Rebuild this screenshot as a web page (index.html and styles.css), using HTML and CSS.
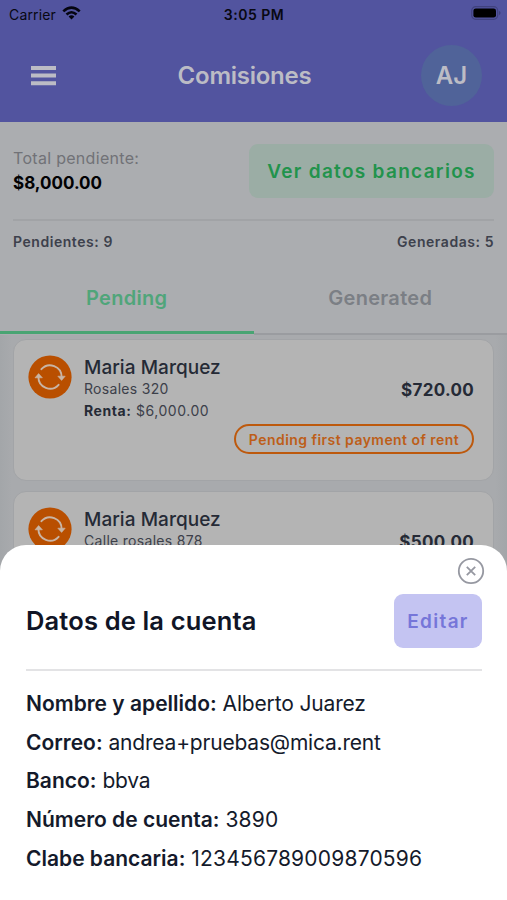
FILE: index.html
```html
<!DOCTYPE html>
<html lang="es">
<head>
<meta charset="utf-8">
<title>Comisiones</title>
<link rel="stylesheet" href="styles.css">
</head>
<body>
<div class="screen">
  <header class="top">
    <div class="status">
      <div class="carrier"><span>Carrier</span>
        <svg width="19" height="14" viewBox="0 0 19 14" fill="#050510"><path d="M.4 4.4Q9.5-3.8 18.6 4.4L16.8 6.3Q9.5-.2 2.2 6.3Z"/><path d="M3.6 7.6Q9.5 2.3 15.4 7.6L13.6 9.4Q9.5 5.8 5.4 9.4Z"/><path d="M6.6 10.6Q9.5 8.1 12.4 10.6L9.5 13.6Z"/></svg>
      </div>
      <div class="time">3:05 PM</div>
      <svg class="battery" width="31" height="14" viewBox="0 0 31 14"><rect x=".7" y=".7" width="26" height="12.6" rx="4" fill="none" stroke="#40427e" stroke-width="1.2"/><rect x="2.4" y="2.4" width="22.6" height="9.2" rx="2.4" fill="#000"/><path d="M28.4 4.8q2 2.2 0 4.4z" fill="#353766"/></svg>
    </div>
    <div class="nav">
      <svg class="menu" width="25" height="20" viewBox="0 0 25 20" fill="#bcbcc5"><path d="M0 0h25v4H0zM0 7.6h25v4H0zM0 15.2h25v4H0z"/></svg>
      <h1>Comisiones</h1>
      <div class="avatar">AJ</div>
    </div>
  </header>
  <section class="summary">
    <div class="totals">
      <div><div class="label">Total pendiente:</div><div class="total">$8,000.00</div></div>
      <button class="bank">Ver datos bancarios</button>
    </div>
    <div class="counts"><span>Pendientes: 9</span><span>Generadas: 5</span></div>
  </section>
  <nav class="tabs"><div class="tab active"><span>Pending</span></div><div class="tab"><span>Generated</span></div></nav>
  <main class="list">
    <article class="card">
      <svg class="cycle" width="44" height="44" viewBox="0 0 44 44"><circle cx="22" cy="22" r="21.6" fill="#b94f00"/><g fill="none" stroke="#c9b5a5" stroke-width="1.9" stroke-linecap="round"><path d="M13.4 14.2A11.6 11.6 0 0 1 33.6 22M30.6 29.8A11.6 11.6 0 0 1 10.4 22"/></g><path d="M29.8 21.2h7.4L33.6 25.4zM7 22.8h7.4L10.6 18.6z" fill="#c9b5a5" stroke="#c9b5a5" stroke-width=".6" stroke-linejoin="round"/></svg>
      <div class="info"><h2>Maria Marquez</h2><p class="street">Rosales 320</p><p class="rent"><b>Renta:</b> $6,000.00</p></div>
      <div class="amount">$720.00</div>
      <div class="badge"><span>Pending first payment of rent</span></div>
    </article>
    <article class="card">
      <svg class="cycle" width="44" height="44" viewBox="0 0 44 44"><circle cx="22" cy="22" r="21.6" fill="#b94f00"/><g fill="none" stroke="#c9b5a5" stroke-width="1.9" stroke-linecap="round"><path d="M13.4 14.2A11.6 11.6 0 0 1 33.6 22M30.6 29.8A11.6 11.6 0 0 1 10.4 22"/></g><path d="M29.8 21.2h7.4L33.6 25.4zM7 22.8h7.4L10.6 18.6z" fill="#c9b5a5" stroke="#c9b5a5" stroke-width=".6" stroke-linejoin="round"/></svg>
      <div class="info"><h2>Maria Marquez</h2><p class="street second">Calle rosales 878</p></div>
      <div class="amount">$500.00</div>
    </article>
  </main>
  <section class="sheet">
    <div class="closerow"><svg width="28" height="28" viewBox="0 0 28 28" fill="none" stroke="#9698a1" stroke-width="1.8"><circle cx="14" cy="14" r="12.2"/><path d="M9.8 9.8l8.4 8.4M18.2 9.8l-8.4 8.4"/></svg></div>
    <div class="sheethead"><h3>Datos de la cuenta</h3><button class="edit">Editar</button></div>
    <div class="rows">
      <p><b>Nombre y apellido:</b> <span class="name">Alberto Juarez</span></p>
      <p><b>Correo:</b> <span class="mail">andrea+pruebas@mica.rent</span></p>
      <p><b>Banco:</b> <span class="mail">bbva</span></p>
      <p><b>Número de cuenta:</b> <span class="digits">3890</span></p>
      <p><b>Clabe bancaria:</b> <span class="digits">123456789009870596</span></p>
    </div>
  </section>
</div>
</body>
</html>
```
FILE: styles.css
```css
* { box-sizing: border-box; margin: 0; padding: 0; }
body { font-family: Inter, "Liberation Sans", sans-serif; overflow: hidden; }
button { font: inherit; border: 0; }
svg { display: block; flex: none; }
.screen { position: relative; width: 507px; height: 900px; overflow: hidden; background: #abadb0; color: #252a36; white-space: nowrap; }
.top { height: 122px; background: #52549f; }
.status { height: 28px; padding: 0 7px 0 9px; display: grid; grid-template-columns: 1fr auto 1fr; align-items: center; font-size: 14px; color: #080812; }
.carrier { display: flex; align-items: center; gap: 6px; letter-spacing: .15px; }
.carrier svg { margin-top: -2px; }
.time { font-weight: 600; letter-spacing: .5px; margin-right: 1px; }
.battery { justify-self: end; margin-right: -2px; margin-top: -2px; }
.nav { height: 94px; padding: 0 25px 0 31px; display: grid; grid-template-columns: 1fr auto 1fr; align-items: center; color: #bcbcc5; }
.menu { margin-top: 2px; }
.nav h1 { font-size: 24px; font-weight: 600; margin-right: 24px; letter-spacing: -.25px; }
.avatar { justify-self: end; width: 61px; height: 61px; border-radius: 50%; background: #506399; display: grid; place-items: center; font-size: 24px; font-weight: 600; }
.summary { height: 141px; padding: 22px 13px 0; }
.totals { height: 75px; display: flex; justify-content: space-between; align-items: flex-start; }
.label { margin-top: 2px; line-height: 24px; font-size: 16px; color: #717277; letter-spacing: .3px; }
.total { line-height: 26px; font-size: 17px; font-weight: 700; color: #020204; }
.bank { width: 245px; height: 54px; border-radius: 9px; background: #9bada5; color: #22934c; font-size: 19px; font-weight: 600; letter-spacing: 1.3px; }
.counts { border-top: 2px solid #a1a3a6; display: flex; justify-content: space-between; line-height: 42px; font-size: 14px; font-weight: 600; color: #3d414c; letter-spacing: .55px; }
.tabs { height: 72px; display: grid; grid-template-columns: 1fr 1fr; text-align: center; line-height: 70px; font-size: 20px; font-weight: 600; color: #7b7f85; letter-spacing: .3px; }
.tab { height: 72px; border-bottom: 2px solid #9a9ca0; }
.tab.active { height: 71px; color: #50a57a; border-bottom: 3px solid #49a473; }
.list { padding: 4px 13px 0; display: flex; flex-direction: column; gap: 10px; background: linear-gradient(90deg, #a3a6a9, #a8aaad 12px, #a8aaad 495px, #a3a6a9); }
.card { height: 142px; border: 1px solid #a2a4a7; border-radius: 13px; background: #b4b4b4; padding: 15px 19px 0 14px; display: grid; grid-template-columns: 44px 1fr auto; grid-template-rows: 69px 30px; column-gap: 12px; align-content: start; }
.card h2 { font-size: 19px; line-height: 26px; font-weight: 500; letter-spacing: .05px; }
.street { font-size: 14px; line-height: 16px; color: #3c404a; letter-spacing: .3px; }
.rent { font-size: 14px; line-height: 28px; color: #3c404a; letter-spacing: .55px; }
.rent b { color: #252a36; }
.amount { font-size: 17px; line-height: 71px; font-weight: 700; letter-spacing: .3px; }
.badge { grid-column: 1 / 4; justify-self: end; width: 240px; height: 30px; border: 2px solid #bd590d; border-radius: 15px; color: #bd5e19; font-size: 14px; line-height: 27px; font-weight: 600; text-align: center; letter-spacing: .45px; }
.sheet { position: absolute; left: 0; right: 0; bottom: 0; height: 355px; border-radius: 26px 26px 0 0; background: #fff; padding: 12px 25px 0 26px; color: #141a2b; }
.closerow { display: flex; justify-content: flex-end; margin-right: -3px; height: 28px; }
.sheethead { height: 86px; padding-top: 9px; display: flex; justify-content: space-between; align-items: flex-start; border-bottom: 2px solid #e3e3e5; }
.sheethead h3 { font-size: 25.5px; line-height: 54px; font-weight: 600; color: #101526; letter-spacing: .15px; }
.edit { width: 88px; height: 54px; border-radius: 9px; background: #c4c4f2; color: #7676d9; font-size: 19px; font-weight: 600; letter-spacing: 1.3px; }
.rows { padding-top: 14px; font-size: 21px; line-height: 38.7px; }
.rows b { font-weight: 600; }
.name { letter-spacing: -.15px; }
.mail { letter-spacing: -.2px; }
.digits { letter-spacing: .2px; }
```
